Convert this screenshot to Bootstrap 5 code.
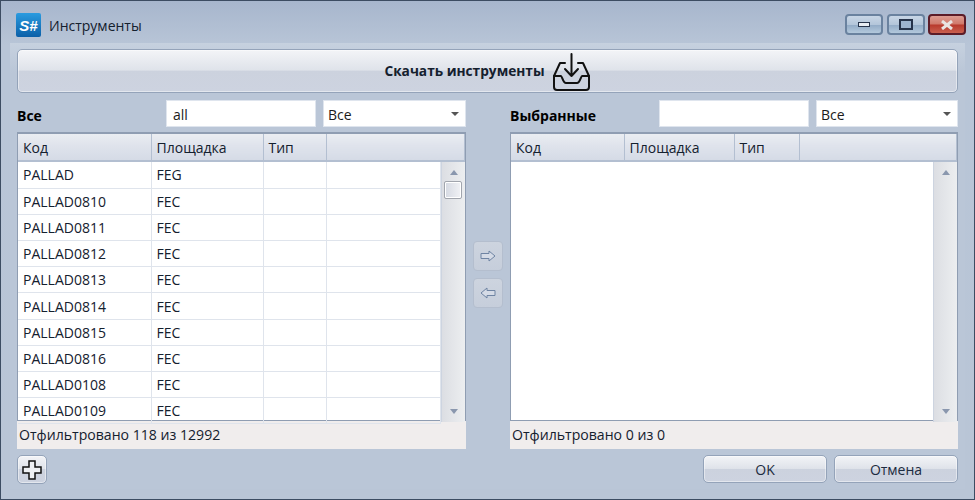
<!DOCTYPE html>
<html lang="ru">
<head>
  <meta charset="UTF-8">
  <title>Инструменты</title>
  <link href="https://cdn.jsdelivr.net/npm/bootstrap@5.3.3/dist/css/bootstrap.min.css" rel="stylesheet">
  <style>
    html, body { margin: 0; height: 500px; overflow: hidden; }
    body { font-family: "Open Sans", "Noto Sans", sans-serif; font-size: 14px; color: #1b1b1b; }

    .win-frame { width: 975px; height: 500px; border: 1px solid #3c4c62; background: linear-gradient(to bottom, #a7b6cd 0, #b8c5d7 44px, #b9c5d6 100%); }
    .win-title { height: 42px; padding: 12px 8px 0 15px; }
    .app-logo { width: 25px; height: 24px; background: linear-gradient(to bottom, #2a9be0, #0b5fa8); color: #fff; font: italic bold 15px "Liberation Sans", sans-serif; border-radius: 2px; }
    .win-name { margin-left: 8px; font-size: 14px; line-height: 26px; color: #14202e; }
    .win-btn { width: 38px; height: 21px; margin-top: 1px; margin-left: 4px; padding: 0; border: 2px solid #6a829f; border-radius: 4px; background: linear-gradient(to bottom, #c8d6e6 0, #b4c6da 50%, #92abc6 52%, #b3c8dc 100%); }
    .win-btn.win-close { margin-left: 3px; border-color: #5c1c28; background: linear-gradient(to bottom, #dd9c92 0, #d0786a 48%, #b8392c 52%, #c9604f 100%); }

    .win-body { margin: 0 9px; height: 446px; padding: 6px 7px 0; background: #bac6d7; background-image: linear-gradient(to bottom, #c6d1df 0, #bac6d7 30px); }

    .btn-wpf { border: 1px solid #94a3b9; border-radius: 5px; color: #14202e; font-size: 14px; padding: 0; background: linear-gradient(to bottom, #f3f4f7 0, #dfe3ea 48%, #ccd2de 50%, #cdd3e0 100%); box-shadow: inset 0 0 0 1px rgba(255,255,255,.45); }
    .btn-download { width: 100%; height: 44px; font-weight: 700; font-size: 13.7px; }
    .btn-download svg { margin-left: 8px; margin-top: 2px; }

    .side-panel { width: 449px; }
    .side-panel.side-right { width: 448px; }
    .side-head { height: 27px; margin-top: 7px; margin-bottom: 5px; }
    .side-label { font-weight: 700; font-size: 14px; color: #000; line-height: 19px; padding-top: 6px; }
    .filter-input { width: 150px; height: 27px; border-radius: 0; border: 1px solid #dfe5ee; padding: 1px 6px 0; font-size: 14px; margin-right: 7px; color: #1b1b1b; }
    .filter-select { width: 143px; height: 27px; border-radius: 0; border: 1px solid #dfe5ee; padding: 1px 4px 0; font-size: 14px; color: #1b1b1b;
      background-image: url("data:image/svg+xml,%3csvg xmlns='http://www.w3.org/2000/svg' viewBox='0 0 8 4'%3e%3cpath fill='%23555' d='M0 0h8L4 4z'/%3e%3c/svg%3e");
      background-size: 8px 4px; background-position: right 6px center; }
    .side-right .filter-select { width: 142px; }

    .grid-box { height: 289px; border: 1px solid #8f9db2; border-top-width: 2px; background: #fff; }
    .grid-main { flex: 1; min-width: 0; overflow: hidden; }
    .grid-table { table-layout: fixed; width: 100%; margin: 0; font-size: 14px; }
    .grid-table th, .grid-table td { padding: 0 5px; vertical-align: middle; color: #14202e; font-weight: 400; white-space: nowrap; border-right: 1px solid #dfe4ec; border-bottom: 1px solid #dfe4ec; box-shadow: none; background: transparent; }
    .grid-table td { height: 26.2px; }
    .grid-table th { height: 27px; background: linear-gradient(to bottom, #eaedf2 0, #dfe3ec 45%, #d5dbe6 100%); border-right: 1px solid #b3bfd1; border-bottom: 2px solid #b3bfd1; }
    .col-code { width: 133px; }
    .col-place { width: 112px; }
    .col-type { width: 63px; }
    .side-right .col-code { width: 113px; }
    .side-right .col-place { width: 110px; }
    .side-right .col-type { width: 65px; }

    .scroll-track { width: 24px; height: 260px; background: linear-gradient(to right, #dcdee3, #eceef0); border-left: 1px solid #cdd4e0; }
    .scroll-arrow { width: 0; height: 0; border-left: 4px solid transparent; border-right: 4px solid transparent; }
    .scroll-up { border-bottom: 5px solid #8a97ae; margin-top: 8px; }
    .scroll-down { border-top: 5px solid #8a97ae; margin-bottom: 8px; }
    .scroll-thumb { width: 18px; height: 18px; margin-top: 6px; margin-right: 2px; border: 1px solid #a1a5ad; border-radius: 2px; background: linear-gradient(to right, #d5d9e2, #f1f2f5); box-shadow: inset 0 0 0 1px #fff; }

    .status-bar { height: 28px; padding-left: 2px; background: #f0eded; color: #14202e; font-size: 14.1px; }

    .mid-col { width: 44px; padding-top: 148px; }
    .btn-move { width: 30px; height: 30px; margin-bottom: 7px; background: linear-gradient(to bottom, #cdd4df, #c6cedb); border: 1px solid #b4bece; border-radius: 4px; padding: 0; }

    .win-foot { margin-top: 6px; }
    .btn-add { width: 30px; height: 29px; }
    .btn-dlg { width: 124px; height: 28px; margin-left: 7px; color: #1c2b40; }
  </style>
</head>
<body>

  <div class="win-frame">
    <div class="win-title d-flex align-items-start">
      <div class="app-logo d-flex align-items-center justify-content-center">S#</div>
      <div class="win-name">Инструменты</div>
      <div class="ms-auto d-flex">
        <button type="button" class="win-btn d-flex align-items-center justify-content-center" aria-label="Свернуть">
          <svg width="12" height="5"><rect x=".5" y=".5" width="11" height="4" fill="#e8edf3" stroke="#26334a"/></svg>
        </button>
        <button type="button" class="win-btn d-flex align-items-center justify-content-center" aria-label="Развернуть">
          <svg width="14" height="11"><rect x="1" y="1" width="12" height="9" fill="#9db4cf" stroke="#26334a" stroke-width="2"/></svg>
        </button>
        <button type="button" class="win-btn win-close d-flex align-items-center justify-content-center" aria-label="Закрыть">
          <svg width="14" height="10"><path d="M2 1l10 8M12 1L2 9" stroke="#e9e4e2" stroke-width="3"/></svg>
        </button>
      </div>
    </div>

    <div class="win-body">
      <button type="button" class="btn btn-wpf btn-download d-flex align-items-center justify-content-center">
        Скачать инструменты
        <svg width="38" height="39" viewBox="0 0 38 39" fill="none" stroke="#111" stroke-width="2" stroke-linejoin="round" stroke-linecap="round">
          <path d="M18.500 1v22M12 16l6.500 7 6.500-7"/>
          <path d="M12 10H7L1 23v11a3 3 0 0 0 3 3h29a3 3 0 0 0 3-3V23L30 10h-5"/>
          <path d="M1 23h7c1 0 2 7 5 7h11c3 0 4-7 5-7h7"/>
        </svg>
      </button>

      <div class="d-flex">
        <div class="side-panel">
          <div class="side-head d-flex">
            <div class="side-label me-auto">Все</div>
            <input class="form-control filter-input" type="text" value="all">
            <select class="form-select filter-select"><option>Все</option></select>
          </div>
          <div class="grid-box d-flex flex-column">
            <table class="table grid-table">
              <thead>
                <tr><th class="col-code">Код</th><th class="col-place">Площадка</th><th class="col-type">Тип</th><th></th></tr>
              </thead>
            </table>
            <div class="d-flex">
              <div class="grid-main">
                <table class="table grid-table">
                  <tbody>
                    <tr><td class="col-code">PALLAD</td><td class="col-place">FEG</td><td class="col-type"></td><td></td></tr>
                    <tr><td>PALLAD0810</td><td>FEC</td><td></td><td></td></tr>
                    <tr><td>PALLAD0811</td><td>FEC</td><td></td><td></td></tr>
                    <tr><td>PALLAD0812</td><td>FEC</td><td></td><td></td></tr>
                    <tr><td>PALLAD0813</td><td>FEC</td><td></td><td></td></tr>
                    <tr><td>PALLAD0814</td><td>FEC</td><td></td><td></td></tr>
                    <tr><td>PALLAD0815</td><td>FEC</td><td></td><td></td></tr>
                    <tr><td>PALLAD0816</td><td>FEC</td><td></td><td></td></tr>
                    <tr><td>PALLAD0108</td><td>FEC</td><td></td><td></td></tr>
                    <tr><td>PALLAD0109</td><td>FEC</td><td></td><td></td></tr>
                  </tbody>
                </table>
              </div>
              <div class="scroll-track d-flex flex-column align-items-center">
                <div class="scroll-arrow scroll-up"></div>
                <div class="scroll-thumb"></div>
                <div class="scroll-arrow scroll-down mt-auto"></div>
              </div>
            </div>
          </div>
          <div class="status-bar d-flex align-items-center">Отфильтровано 118 из 12992</div>
        </div>

        <div class="mid-col d-flex flex-column align-items-center">
          <button type="button" class="btn-move d-flex align-items-center justify-content-center" aria-label="Добавить">
            <svg width="16" height="12"><path d="M1 3.500h8V1l6 5-6 5V8.500H1z" fill="#d5dbe6" stroke="#6f84a3"/></svg>
          </button>
          <button type="button" class="btn-move d-flex align-items-center justify-content-center" aria-label="Убрать">
            <svg width="16" height="12"><path d="M15 3.500H7V1L1 6l6 5V8.500h8z" fill="#d5dbe6" stroke="#6f84a3"/></svg>
          </button>
        </div>

        <div class="side-panel side-right">
          <div class="side-head d-flex">
            <div class="side-label me-auto">Выбранные</div>
            <input class="form-control filter-input" type="text" value="">
            <select class="form-select filter-select"><option>Все</option></select>
          </div>
          <div class="grid-box d-flex flex-column">
            <table class="table grid-table">
              <thead>
                <tr><th class="col-code">Код</th><th class="col-place">Площадка</th><th class="col-type">Тип</th><th></th></tr>
              </thead>
            </table>
            <div class="d-flex">
              <div class="grid-main"></div>
              <div class="scroll-track d-flex flex-column align-items-center">
                <div class="scroll-arrow scroll-up"></div>
                <div class="scroll-arrow scroll-down mt-auto"></div>
              </div>
            </div>
          </div>
          <div class="status-bar d-flex align-items-center">Отфильтровано 0 из 0</div>
        </div>
      </div>

      <div class="win-foot d-flex align-items-start">
        <button type="button" class="btn btn-wpf btn-add d-flex align-items-center justify-content-center me-auto" aria-label="Добавить">
          <svg width="22" height="22"><path d="M8 2h6v6h6v6h-6v6H8v-6H2V8h6z" fill="#eef0f3" stroke="#111" stroke-width="1.500"/></svg>
        </button>
        <button type="button" class="btn btn-wpf btn-dlg">OK</button>
        <button type="button" class="btn btn-wpf btn-dlg">Отмена</button>
      </div>
    </div>
  </div>

  <script src="https://cdn.jsdelivr.net/npm/bootstrap@5.3.3/dist/js/bootstrap.bundle.min.js"></script>
</body>
</html>
